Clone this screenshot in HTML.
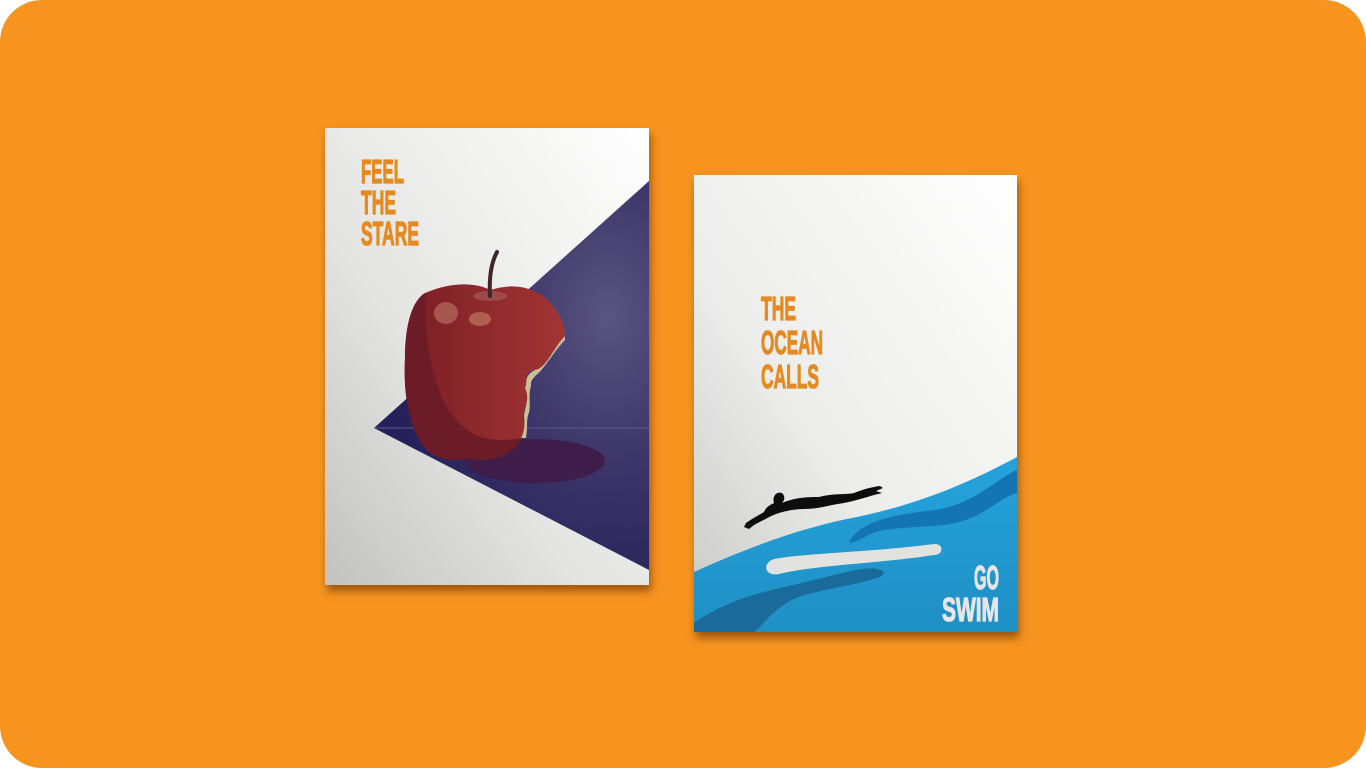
<!DOCTYPE html>
<html><head><meta charset="utf-8"><style>
html,body{margin:0;padding:0;background:#fff;width:1366px;height:768px;overflow:hidden}
.bg{position:absolute;left:0;top:0;width:1366px;height:768px;background:#f7941f;border-radius:42px}
.p{position:absolute;box-shadow:2px 6px 8px rgba(80,35,0,.55)}
svg{display:block}
</style></head><body>
<div class="bg"></div>
<div class="p" style="left:325px;top:128px;width:324px;height:457px">
<svg width="324" height="457" viewBox="0 0 324 457">
<defs>
<linearGradient id="w1" x1="1" y1="0" x2="0" y2="1"><stop offset="0" stop-color="#ffffff"/><stop offset=".6" stop-color="#e4e4e2"/><stop offset="1" stop-color="#c2c3bf"/></linearGradient>
<radialGradient id="t1" cx="0.85" cy="0.35" r="0.8"><stop offset="0" stop-color="#5a5480"/><stop offset=".5" stop-color="#3a3468"/><stop offset="1" stop-color="#25205a"/></radialGradient>
<linearGradient id="a1" x1="0" y1="0" x2="1" y2="0"><stop offset="0" stop-color="#7a1e24"/><stop offset="1" stop-color="#a33535"/></linearGradient>
</defs>
<rect width="324" height="457" fill="url(#w1)"/>
<polygon points="324,53 49,300 324,442" fill="url(#t1)"/>
<line x1="49" y1="300" x2="324" y2="300" stroke="#5d5888" stroke-width="1"/>
<ellipse cx="210" cy="333" rx="70" ry="22" fill="#3f1d4b"/>
<path d="M100,165 C130,152 155,156 165,162 C180,158 195,155 215,166 C232,178 240,195 240,208 C228,220 222,240 210,242 C195,245 205,255 200,260 C205,270 200,275 198,290 C200,298 199,308 196,310 C188,330 160,335 145,330 C125,335 110,330 100,320 C85,300 78,270 80,230 C80,195 88,172 100,165 Z" fill="url(#a1)"/>
<path d="M100,165 C88,172 80,195 80,230 C78,270 85,300 100,320 C110,330 125,335 145,330 C160,335 188,330 196,310 C170,315 150,310 140,300 C115,280 100,240 100,165 Z" fill="#6c1c26"/>
<path d="M240,208 C228,220 222,240 210,242 C198,248 203,255 200,260 C205,270 200,278 199,288 C200,298 199,305 196,310 L201,310 C203,300 201,290 204,285 C206,275 203,268 206,258 C205,250 212,248 218,240 C226,230 232,220 240,212 Z" fill="#cbbf98"/>
<ellipse cx="121" cy="185" rx="12" ry="11" fill="#a7574e"/>
<ellipse cx="155" cy="191" rx="11" ry="7" fill="#b06050"/>
<ellipse cx="165" cy="168" rx="17" ry="5" fill="#9c4a4c"/>
<path d="M165,168 C164,150 166,135 172,124" stroke="#402628" stroke-width="4" fill="none" stroke-linecap="round"/>
<g font-family="Liberation Sans, sans-serif" font-weight="bold" fill="#e38b22" stroke="#e38b22" stroke-width="1.2" font-size="33">
<text x="36" y="55" textLength="43" lengthAdjust="spacingAndGlyphs">FEEL</text>
<text x="36" y="86" textLength="35" lengthAdjust="spacingAndGlyphs">THE</text>
<text x="36" y="117" textLength="58" lengthAdjust="spacingAndGlyphs">STARE</text>
</g>
</svg></div>
<div class="p" style="left:694px;top:175px;width:323px;height:457px">
<svg width="323" height="457" viewBox="0 0 323 457">
<defs>
<linearGradient id="w2" x1="1" y1="0" x2="0" y2="1"><stop offset="0" stop-color="#ffffff"/><stop offset=".6" stop-color="#ececea"/><stop offset="1" stop-color="#c8c9c5"/></linearGradient>
<linearGradient id="b2" x1="0" y1="0" x2="0" y2="1"><stop offset="0" stop-color="#25a3dc"/><stop offset="1" stop-color="#1f8fc4"/></linearGradient>
</defs>
<rect width="323" height="457" fill="url(#w2)"/>
<path d="M0,397 C60,370 110,352 163,342 C230,328 280,305 323,282 L323,457 L0,457 Z" fill="url(#b2)"/>
<path d="M156,365 C170,345 200,340 240,335 C280,330 300,305 323,295 L323,318 C300,325 290,345 250,350 C220,353 190,352 175,360 C165,365 152,372 156,365 Z" fill="#1475b5"/>
<path d="M0,448 C40,420 80,415 120,405 C150,398 180,388 190,397 C192,405 150,410 110,420 C80,430 70,450 60,457 L0,457 Z" fill="#1a6a9c"/>
<path d="M80,384 C110,378 180,377 240,369 C250,368 250,380 240,380 C190,388 120,390 85,399 C70,402 68,388 80,384 Z" fill="#e2e3e1"/>
<path d="M52,348 L58,344 L70,337 C72,332 76,330 80,328 C78,322 82,316 88,318 C92,322 90,326 88,328 C100,323 110,322 125,322 C140,318 150,320 160,318 C170,314 178,312 186,311 L189,313 L182,316 L188,318 L180,320 C170,323 160,326 150,328 C135,330 125,334 110,334 C100,334 92,336 85,338 C78,340 70,345 60,350 L55,354 L50,352 Z" fill="#0d0d0d"/>
<g font-family="Liberation Sans, sans-serif" font-weight="bold" font-size="33" stroke-width="1.2">
<text x="67" y="145" fill="#e38b22" stroke="#e38b22" textLength="35" lengthAdjust="spacingAndGlyphs">THE</text>
<text x="67" y="179" fill="#e38b22" stroke="#e38b22" textLength="62" lengthAdjust="spacingAndGlyphs">OCEAN</text>
<text x="67" y="213" fill="#e38b22" stroke="#e38b22" textLength="58" lengthAdjust="spacingAndGlyphs">CALLS</text>
<text x="305" y="414" fill="#e6e6e6" stroke="#e6e6e6" text-anchor="end" textLength="25" lengthAdjust="spacingAndGlyphs">GO</text>
<text x="305" y="446" fill="#e6e6e6" stroke="#e6e6e6" text-anchor="end" textLength="57" lengthAdjust="spacingAndGlyphs">SWIM</text>
</g>
</svg></div>
</body></html>
